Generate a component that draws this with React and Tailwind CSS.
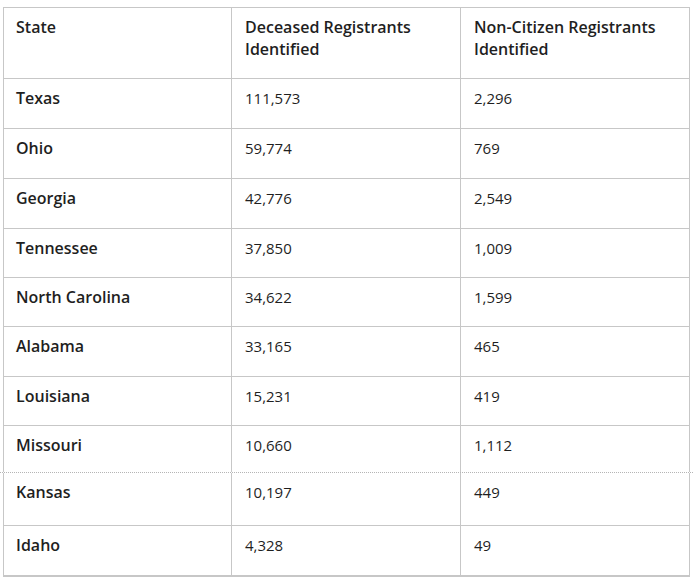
import React from "react";

const rows = [
  { state: "Texas", deceased: "111,573", nonCitizen: "2,296", h: "h-[50px]" },
  { state: "Ohio", deceased: "59,774", nonCitizen: "769", h: "h-[50px]" },
  { state: "Georgia", deceased: "42,776", nonCitizen: "2,549", h: "h-[50px]" },
  { state: "Tennessee", deceased: "37,850", nonCitizen: "1,009", h: "h-[49px]" },
  { state: "North Carolina", deceased: "34,622", nonCitizen: "1,599", h: "h-[49px]" },
  { state: "Alabama", deceased: "33,165", nonCitizen: "465", h: "h-[50px]" },
  { state: "Louisiana", deceased: "15,231", nonCitizen: "419", h: "h-[49px]" },
  { state: "Missouri", deceased: "10,660", nonCitizen: "1,112", h: "h-[46px]", last: true },
];

const lowerRows = [
  { state: "Kansas", deceased: "10,197", nonCitizen: "449", h: "h-[53px]" },
  { state: "Idaho", deceased: "4,328", nonCitizen: "49", h: "h-[50px]" },
];

function Row({ row }) {
  return (
    <div
      className={`grid grid-cols-[228px_229px_1fr] ${row.h} ${
        row.last ? "" : "border-b border-[#c7c7c7]"
      }`}
    >
      <div className="border-r border-[#c7c7c7] pl-3 pt-2 text-[16px] font-semibold">
        {row.state}
      </div>
      <div className="border-r border-[#c7c7c7] pl-[13px] pt-2">
        {row.deceased}
      </div>
      <div className="pl-[13px] pt-2">{row.nonCitizen}</div>
    </div>
  );
}

export default function App() {
  return (
    <div
      className="bg-white w-[693px] h-[579px] pt-[7px] text-[15px] leading-[22px] text-[#1f1f1f]"
      style={{ fontFamily: "'Open Sans', 'Liberation Sans', sans-serif" }}
    >
      <div className="ml-[3px] w-[687px] border border-b-0 border-[#c7c7c7]">
        <div className="grid grid-cols-[228px_229px_1fr] h-[71px] border-b border-[#c7c7c7] text-[16px] font-semibold">
          <div className="border-r border-[#c7c7c7] pl-3 pt-2">State</div>
          <div className="border-r border-[#c7c7c7] pl-[13px] pt-2">
            Deceased Registrants
            <br />
            Identified
          </div>
          <div className="pl-[13px] pt-2">
            Non-Citizen Registrants
            <br />
            Identified
          </div>
        </div>
        {rows.map((row) => (
          <Row key={row.state} row={row} />
        ))}
      </div>

      <div className="h-px w-full border-t border-dotted border-[#b5b5b5]" />

      <div className="ml-[3px] w-[687px] border border-t-0 border-[#c7c7c7]">
        {lowerRows.map((row) => (
          <Row key={row.state} row={row} />
        ))}
      </div>
    </div>
  );
}
